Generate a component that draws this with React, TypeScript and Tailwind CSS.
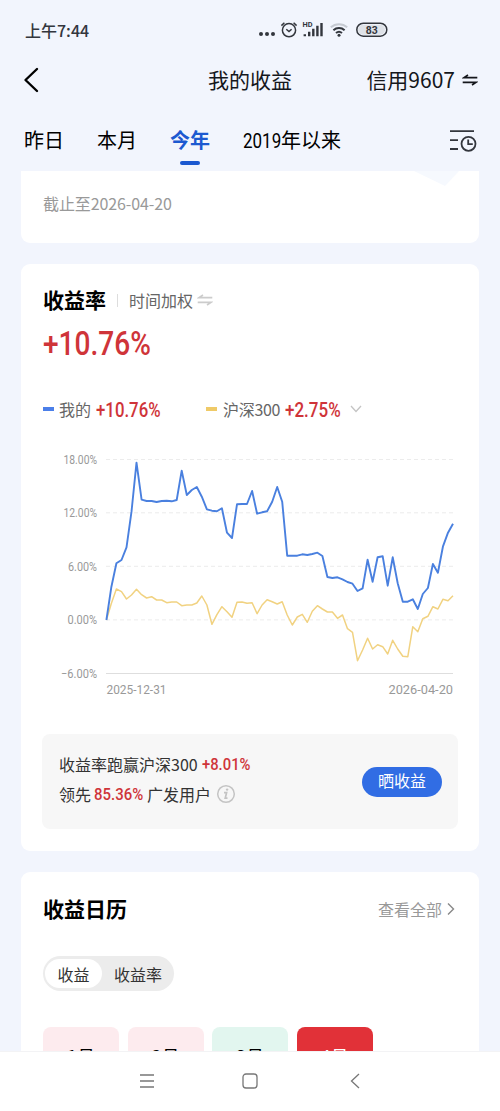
import clsx from "clsx";

// plot units: each step is 15.07 wide, 0% sits at 540 and one percent is 26.8 high
const mine = [
  540, 440, 370, 360, 322, 215, 68, 179, 183, 183, 186, 183, 182, 184, 180, 92, 165, 150, 141, 170,
  208, 212, 214, 205, 278, 294, 193, 192, 192, 153, 221, 217, 214, 185, 141, 185, 347, 347, 347, 343,
  345, 342, 338, 348, 411, 414, 412, 418, 426, 431, 453, 445, 359, 425, 352, 349, 437, 352, 430, 485,
  485, 478, 507, 462, 444, 372, 398, 320, 278, 251,
];

const index300 = [
  540, 490, 447, 455, 477, 465, 448, 464, 474, 470, 480, 480, 488, 486, 486, 497, 495, 495, 489, 468,
  495, 553, 524, 500, 515, 532, 487, 486, 490, 488, 521, 495, 479, 485, 492, 485, 525, 555, 531, 523,
  547, 514, 497, 507, 516, 516, 535, 525, 566, 577, 662, 630, 595, 627, 614, 620, 642, 601, 627, 649,
  650, 560, 575, 536, 529, 500, 507, 478, 482, 467,
];

const ticks = [
  { label: "18.00%", y: 19.5, x: 63.5 },
  { label: "12.00%", y: 72.8, x: 63.5 },
  { label: "6.00%", y: 126.3, x: 68 },
  { label: "0.00%", y: 179.9, x: 67.5 },
  { label: "−6.00%", y: 233.5, x: 61 },
];

const months = [
  { label: "1月", className: "bg-[#fdebee] text-black" },
  { label: "2月", className: "bg-[#fdebee] text-black" },
  { label: "3月", className: "bg-[#e2f6ef] text-black" },
  { label: "4月", className: "bg-[#e13138] text-white" },
];

const toPoints = (values: number[]) =>
  values.map((v, i) => `${(63.4 + i * 5.023).toFixed(1)},${(v / 3).toFixed(1)}`).join(" ");

function StatusBar() {
  return (
    <div className="flex h-[60px] items-center pl-[25px] text-[#33363d]">
      <span className="w-[233px] text-[16px] font-medium">上午7:44</span>
      <svg width="131" height="20" viewBox="0 0 131 20" fill="none" stroke="currentColor">
        <g fill="currentColor" stroke="none">
          <circle cx="3" cy="14" r="2" />
          <circle cx="9" cy="14" r="2" />
          <circle cx="15" cy="14" r="2" />
        </g>
        <circle cx="31" cy="10.2" r="6.6" strokeWidth="1.5" />
        <path d="M28.3 9.2l2.7 2.3 2.6-2.3M23.4 5.6l3-2.8M38.6 5.6l-3-2.8" strokeWidth="1.5" />
        <text x="44.5" y="7" textLength="10" lengthAdjust="spacingAndGlyphs" fontSize="7" fontWeight="700" fill="currentColor" stroke="none" fontFamily="Roboto, sans-serif">
          HD
        </text>
        <path d="M46.8 16.2v-2M51.2 16.2v-4.4M55.3 16.2V8.7M59.4 16.2V5.7M63.5 16.2V3" strokeWidth="2.4" />
        <path d="M72.8 7.3a12.3 12.3 0 0 1 16.4 0" strokeWidth="2" stroke="#c6cad2" />
        <path d="M75.4 10.2a8.4 8.4 0 0 1 11.2 0M78 13a4.6 4.6 0 0 1 6 0" strokeWidth="2" />
        <circle cx="81" cy="15.2" r="1.5" fill="currentColor" stroke="none" />
        <rect x="98.8" y="3.2" width="30" height="13" rx="6.5" strokeWidth="1.5" />
        <path d="M105 4.8h17a5 5 0 0 1 0 10h-17a5 5 0 0 1 0-10z" fill="#dfe2e8" stroke="none" />
        <text x="113.8" y="13.8" textAnchor="middle" textLength="12" lengthAdjust="spacingAndGlyphs" fontSize="11.5" fontWeight="700" fill="currentColor" stroke="none" fontFamily="Roboto, sans-serif">
          83
        </text>
      </svg>
    </div>
  );
}

function SwapIcon({ className }: { className?: string }) {
  return (
    <svg className={className} width="16" height="12" viewBox="0 0 16 12" fill="none" stroke="currentColor" strokeWidth="1.6">
      <path d="M15.3 3.6H2L6 1M.7 8.4H14L10 11" />
    </svg>
  );
}

// Narrow figures: the outer box keeps the final width, the inner text is squeezed into it
function Figure({ children, box, text }: { children: string; box: string; text: string }) {
  return (
    <span className={clsx("inline-block shrink-0 whitespace-nowrap", box)}>
      <span className={clsx("inline-block origin-left font-['Roboto',sans-serif]", text)}>{children}</span>
    </span>
  );
}

function Header() {
  return (
    <header className="grid h-10 grid-cols-[1fr_auto_1fr] items-center pr-[22px] pl-[23px] text-[21px] text-[#15171c]">
      <svg width="16" height="26" viewBox="0 0 16 26" fill="none" stroke="#000" strokeWidth="2.4">
        <path d="M14 2L2.5 13 14 24" strokeLinecap="round" strokeLinejoin="round" />
      </svg>
      <h1 className="-ml-px">我的收益</h1>
      <div className="flex items-center justify-end gap-[7px]">
        <span>信用9607</span>
        <SwapIcon />
      </div>
    </header>
  );
}

function Tabs() {
  return (
    <nav className="flex h-[71px] items-start pt-[25px] pl-[24px] text-[20px] leading-[29px] text-black">
      <span className="w-[73px]">昨日</span>
      <span className="w-[73px]">本月</span>
      <span className="flex w-[73px] flex-col items-start font-bold text-[#1c59d0]">
        今年
        <span className="mt-[7px] ml-[10px] h-[4px] w-[20px] rounded-full bg-[#1c59d0]" />
      </span>
      <span className="flex">
        <Figure box="w-[38px]" text="scale-x-[0.85]">2019</Figure>
        年以来
      </span>
      <svg className="mt-[4px] ml-auto mr-[23px]" width="28" height="24" viewBox="0 0 28 24" fill="none" stroke="#33363d" strokeWidth="1.8">
        <path d="M1 2.2h24M1 11.2h8M1 20h8" />
        <circle cx="19.5" cy="14.8" r="7" />
        <path d="M19.2 10.5v4.7h4.6" />
      </svg>
    </nav>
  );
}

function Chart() {
  return (
    <svg className="mt-[16px] block" width="415" height="262" viewBox="0 0 415 262" fill="none" fontFamily="Roboto, sans-serif" fontSize="12">
      {ticks.map((t, i) => (
        <g key={t.label}>
          <line
            x1="63"
            x2="410"
            y1={t.y}
            y2={t.y}
            stroke={i === 4 ? "#dedede" : "#ececec"}
            strokeDasharray={i === 4 ? undefined : "4 3"}
          />
          <text x={t.x - 43} y={t.y + 4.5} textLength={97 - t.x} lengthAdjust="spacingAndGlyphs" fill="#999">
            {t.label}
          </text>
        </g>
      ))}
      <polyline points={toPoints(index300)} stroke="#f1d281" strokeWidth="1.5" strokeLinejoin="round" />
      <polyline points={toPoints(mine)} stroke="#4a80df" strokeWidth="1.9" strokeLinejoin="round" />
      <text x="63.5" y="254" textLength="60" lengthAdjust="spacingAndGlyphs" fill="#999">
        2025-12-31
      </text>
      <text x="345.5" y="254" textLength="64.5" lengthAdjust="spacingAndGlyphs" fill="#999">
        2026-04-20
      </text>
    </svg>
  );
}

function ReturnCard() {
  return (
    <section className="mt-[21px] h-[587px] rounded-[9px] bg-white px-[22px] pt-[21px]">
      <div className="flex h-[30px] items-center">
        <h2 className="text-[21px] font-bold text-black">收益率</h2>
        <span className="mx-[11px] h-[13px] w-px bg-[#ddd]" />
        <span className="text-[16px] text-[#666]">时间加权</span>
        <SwapIcon className="ml-[4px] text-[#ccc]" />
      </div>
      <div className="flex h-[54px] items-center text-[34px] font-medium text-[#cf3439]">
        <Figure box="w-[108px]" text="scale-x-[0.825]">+10.76%</Figure>
      </div>

      <div className="mt-[25px] flex h-[30px] items-center text-[16px] text-[#666]">
        <span className="mr-[5px] h-[4px] w-[11px] bg-[#4b7fe9]" />
        我的
        <span className="ml-[5px] flex w-[110px] text-[20px] font-medium text-[#cf3439]">
          <Figure box="w-[65px]" text="scale-x-[0.84]">+10.76%</Figure>
        </span>
        <span className="mr-[6px] h-[4px] w-[11px] bg-[#efca68]" />
        <span className="w-[57px] whitespace-nowrap tracking-[-0.3px]">沪深300</span>
        <span className="ml-[5px] flex text-[20px] font-medium text-[#cf3439]">
          <Figure box="w-[56px]" text="scale-x-[0.85]">+2.75%</Figure>
        </span>
        <svg className="ml-[9px]" width="12" height="8" viewBox="0 0 12 8" fill="none" stroke="#c4c4c4" strokeWidth="1.3">
          <path d="M1 1l5 5.5L11 1" />
        </svg>
      </div>

      <Chart />

      <div className="mt-[32px] -ml-px flex h-[95px] w-[416px] items-start justify-between rounded-[8px] bg-[#f7f7f7] pt-[15px] pr-[16px] pl-[17px] text-[16px] text-[#333]">
        <div>
          <div className="flex h-[30px] items-center">
            收益率跑赢沪深300
            <span className="ml-[4px] flex text-[17px] font-medium text-[#cf3439]">
              <Figure box="w-[49px]" text="scale-x-[0.87]">+8.01%</Figure>
            </span>
          </div>
          <div className="flex h-[30px] items-center">
            领先
            <span className="mx-[3px] flex text-[17px] font-medium text-[#cf3439]">
              <Figure box="w-[50px]" text="scale-x-[0.88]">85.36%</Figure>
            </span>
            广发用户
            <svg className="ml-[5px]" width="20" height="20" viewBox="0 0 20 20" fill="none" stroke="#c4c4c4" strokeWidth="1.5">
              <circle cx="10" cy="10" r="8.3" />
              <path d="M8 8.6h2.6l-1.4 5.6h2.3" strokeWidth="1.7" />
              <circle cx="11.1" cy="5.6" r="1.2" fill="#c4c4c4" stroke="none" />
            </svg>
          </div>
        </div>
        <button className="mt-[18px] h-[30px] w-[80px] rounded-full bg-[#316de4] pb-[3px] text-[16px] leading-[27px] text-white">
          晒收益
        </button>
      </div>
    </section>
  );
}

function CalendarCard() {
  return (
    <section className="mt-[21px] h-[300px] rounded-t-[9px] bg-white px-[22px] pt-[21px]">
      <div className="flex h-[31px] items-center justify-between">
        <h2 className="text-[21px] font-bold text-black">收益日历</h2>
        <span className="flex items-center gap-[5px] pr-[2px] text-[16px] text-[#999]">
          查看全部
          <svg width="8" height="14" viewBox="0 0 8 14" fill="none" stroke="#888" strokeWidth="1.4">
            <path d="M1 1.5L6.5 7 1 12.5" />
          </svg>
        </span>
      </div>
      <div className="mt-[32px] flex h-[35px] w-[131px] items-center rounded-full bg-[#ececec] p-[3px] text-[16px] text-[#333]">
        <span className="-ml-px flex h-[29px] w-[57px] items-center justify-center rounded-full bg-white">收益</span>
        <span className="ml-[12px]">收益率</span>
      </div>
      <div className="mt-[36px] flex gap-[8.5px] text-[18px]">
        {months.map((m) => (
          <div key={m.label} className={clsx("flex h-[76px] w-[76px] justify-center rounded-[8px] pt-[16px]", m.className)}>
            {m.label}
          </div>
        ))}
      </div>
    </section>
  );
}

function SystemNav() {
  return (
    <footer className="flex h-[60px] items-center border-t border-[#f3f3f5] bg-white pb-[2px] pl-[139px] text-[#777]">
      <svg width="224" height="18" viewBox="0 0 224 18" fill="none" stroke="currentColor" strokeWidth="1.3">
        <path d="M1 3h14M1 9h14M1 15h14" />
        <rect x="104" y="2" width="14" height="14" rx="3" />
        <path d="M220 2l-7.5 7 7.5 7" />
      </svg>
    </footer>
  );
}

export default function App() {
  return (
    <div className="flex h-[1111px] w-[500px] flex-col overflow-hidden bg-[#f2f5fd] font-['Noto_Sans_CJK_SC',sans-serif]">
      <StatusBar />
      <Header />
      <Tabs />
      <main className="min-h-0 flex-1 overflow-hidden px-[21px]">
        <section className="flex h-[72px] items-start justify-between rounded-b-[9px] bg-white pl-[22px] text-[16px] text-[#999]">
          <span className="pt-[20px] tracking-[-0.1px]">截止至2026-04-20</span>
          <svg className="mr-[20px]" width="45" height="16" viewBox="0 0 45 16">
            <path d="M0 0h45L31 15z" fill="#f6f9fe" />
          </svg>
        </section>
        <ReturnCard />
        <CalendarCard />
      </main>
      <SystemNav />
    </div>
  );
}
